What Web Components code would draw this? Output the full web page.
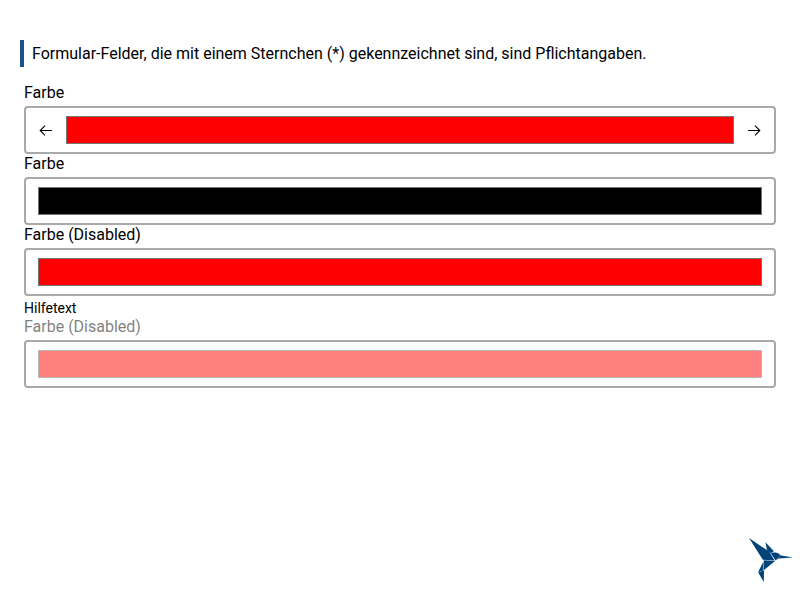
<!DOCTYPE html>
<html lang="de">
<head>
<meta charset="utf-8">
<title>Farbe</title>
<style>
body { margin: 0; background: #fff; color: #000; font: 16px/24px Roboto, sans-serif; }
</style>
</head>
<body>
<form-page>
  <form-hint>Formular-Felder, die mit einem Sternchen (*) gekennzeichnet sind, sind Pflichtangaben.</form-hint>
  <color-field>Farbe<arrow-icon slot="start"></arrow-icon><arrow-icon slot="end" right></arrow-icon></color-field>
  <color-field style="--color:#000">Farbe</color-field>
  <color-field>Farbe (Disabled)<span slot="hint">Hilfetext</span></color-field>
  <color-field disabled>Farbe (Disabled)</color-field>
  <bird-logo slot="logo"></bird-logo>
</form-page>
<script>
const define = (name, html) => customElements.define(name, class extends HTMLElement {
  constructor() {
    super();
    this.attachShadow({ mode: 'open' }).innerHTML = html;
  }
});

define('form-page', `<style>
  :host { display: flex; flex-direction: column; justify-content: space-between; box-sizing: border-box; height: 600px; padding: 40px 20px 18px; }
  main { display: flex; flex-direction: column; }
  footer { display: flex; justify-content: flex-end; margin-right: -13px; }
</style><main><slot></slot></main><footer><slot name="logo"></slot></footer>`);

define('form-hint', `<style>
  :host { display: block; box-sizing: border-box; height: 27px; line-height: 27px; border-left: 4px solid #1b5091; padding-left: 8px; margin-bottom: 14px; }
</style><slot></slot>`);

define('color-field', `<style>
  :host { display: block; margin: 0 4px; --color: #f00; }
  .label { height: 25px; line-height: 23px; }
  .box { display: flex; align-items: center; box-sizing: border-box; height: 48px; border: 2px solid #a9a9a9; border-radius: 4px; padding: 0 12px; margin-bottom: -2px; }
  .swatch { flex: 1; box-sizing: border-box; height: 28px; border: 1px solid #767676; background: var(--color); }
  ::slotted(arrow-icon[slot=start]) { margin-right: 12px; }
  ::slotted(arrow-icon[slot=end]) { margin-left: 12px; }
  ::slotted([slot=hint]) { display: block; font-size: 14px; line-height: 21px; padding-top: 4px; margin-bottom: -4px; }
  :host([disabled]) .label, :host([disabled]) .swatch { opacity: .5; }
</style><div class="label"><slot></slot></div>
<div class="box"><slot name="start"></slot><div class="swatch"></div><slot name="end"></slot></div>
<slot name="hint"></slot>`);

define('arrow-icon', `<style>
  :host { display: block; width: 16px; height: 16px; }
  :host([right]) { transform: scaleX(-1); }
  svg { display: block; }
</style><svg width="16" height="16" viewBox="0 0 16 16" fill="none" stroke="#000" stroke-width="1.1"><path d="M14 8.5H2.2M7 3.6L2.2 8.5L7 13.4"/></svg>`);

define('bird-logo', `<style>
  :host { display: block; width: 44px; height: 44px; }
  svg { display: block; }
</style><svg width="44" height="44" viewBox="749 538 44 44" fill="#004378">
  <path d="M749 538L769.3 551.8L774.6 560.5L762.8 559.8Z"/>
  <path d="M765.5 542.3L773.9 551.3L770.2 553.2L767 550.3Z"/>
  <path d="M770.3 552.7L775 552.5Q778.3 552.2 780.4 555.2L780.2 557.4L775.5 560.6Z"/>
  <path d="M779.8 555.2L793 557.5L778.6 558.6Z"/>
  <path d="M763.8 560.2L775 560.9L764.1 570.1Z"/>
  <path d="M763.5 561.6V570.2L758 572.3Z"/>
  <path d="M758.2 572.4L764 570.3L763.8 582Z"/>
  <path d="M770 552.4L775.2 560.7L780 556.2" fill="none" stroke="#c6d5e2" stroke-width=".4"/>
</svg>`);
</script>
</body>
</html>
